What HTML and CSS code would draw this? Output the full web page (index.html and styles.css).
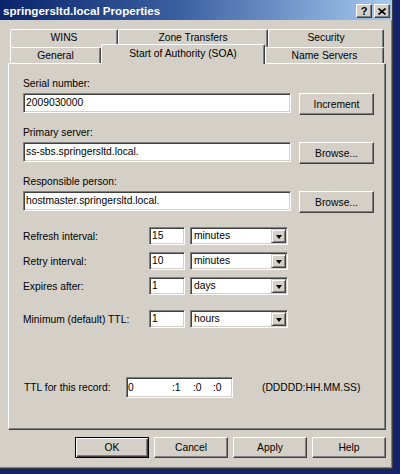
FILE: index.html
```html
<!DOCTYPE html>
<html>
<head>
<meta charset="utf-8">
<title>springersltd.local Properties</title>
<link rel="stylesheet" href="styles.css">
</head>
<body>
<div class="window">
  <div class="titlebar">
    <span class="title">springersltd.local Properties</span>
    <div class="tb-buttons">
      <div class="tb-btn help">?</div>
      <div class="tb-btn close">
        <svg width="8" height="7" viewBox="0 0 8 7"><path d="M0.5 0.5 L7.5 6.5 M7.5 0.5 L0.5 6.5" stroke="#000" stroke-width="1.6" fill="none"/></svg>
      </div>
    </div>
  </div>
  <div class="client">
    <div class="tab-row back">
      <div class="tab t-wins">WINS</div>
      <div class="tab t-zone">Zone Transfers</div>
      <div class="tab t-sec">Security</div>
    </div>
    <div class="tab-row front">
      <div class="tab t-gen">General</div>
      <div class="tab selected t-soa">Start of Authority (SOA)</div>
      <div class="tab t-ns">Name Servers</div>
    </div>
    <div class="panel">
      <div class="field">
        <div class="label">Serial number:</div>
        <div class="field-row">
          <div class="textbox wide">2009030000</div>
          <div class="button side">Increment</div>
        </div>
      </div>
      <div class="field">
        <div class="label">Primary server:</div>
        <div class="field-row">
          <div class="textbox wide">ss-sbs.springersltd.local.</div>
          <div class="button side">Browse...</div>
        </div>
      </div>
      <div class="field">
        <div class="label">Responsible person:</div>
        <div class="field-row">
          <div class="textbox wide">hostmaster.springersltd.local.</div>
          <div class="button side">Browse...</div>
        </div>
      </div>
      <div class="intervals">
        <div class="irow">
          <span class="ilabel">Refresh interval:</span>
          <div class="textbox num">15</div>
          <div class="combo"><span class="combo-text">minutes</span><span class="combo-btn"><span class="arrow"></span></span></div>
        </div>
        <div class="irow">
          <span class="ilabel">Retry interval:</span>
          <div class="textbox num">10</div>
          <div class="combo"><span class="combo-text">minutes</span><span class="combo-btn"><span class="arrow"></span></span></div>
        </div>
        <div class="irow">
          <span class="ilabel">Expires after:</span>
          <div class="textbox num">1</div>
          <div class="combo"><span class="combo-text">days</span><span class="combo-btn"><span class="arrow"></span></span></div>
        </div>
        <div class="irow gap-lg">
          <span class="ilabel">Minimum (default) TTL:</span>
          <div class="textbox num">1</div>
          <div class="combo"><span class="combo-text">hours</span><span class="combo-btn"><span class="arrow"></span></span></div>
        </div>
      </div>
      <div class="ttl-row">
        <span class="ttl-label">TTL for this record:</span>
        <div class="textbox ttl"><span class="seg d">0</span><span class="seg h">:1</span><span class="seg m">:0</span><span class="seg s">:0</span></div>
        <span class="fmt">(DDDDD:HH.MM.SS)</span>
      </div>
    </div>
    <div class="buttons">
      <div class="button dlg default">OK</div>
      <div class="button dlg">Cancel</div>
      <div class="button dlg">Apply</div>
      <div class="button dlg">Help</div>
    </div>
  </div>
</div>
</body>
</html>
```

FILE: styles.css
```css
* { box-sizing: border-box; }
html, body { margin: 0; padding: 0; }
body {
  width: 400px;
  height: 474px;
  overflow: hidden;
  background: #15246a;
  font-family: "Liberation Sans", Arial, sans-serif;
  font-size: 10.3px;
  color: #000;
}
.window {
  width: 393px;
  height: 469px;
  background: #d4d0c8;
  border-right: 1px solid #404040;
  border-bottom: 1px solid #404040;
  box-shadow: inset -1px -1px 0 #808080;
  display: flex;
  flex-direction: column;
}
.titlebar {
  height: 20px;
  flex: none;
  background: linear-gradient(to right, #0a246a 0%, #3a5fa0 45%, #a6caf0 100%);
  display: flex;
  align-items: center;
  justify-content: space-between;
  padding: 0 2px 0 3px;
}
.title {
  color: #fff;
  font-weight: bold;
  font-size: 11.6px;
  letter-spacing: 0;
}
.tb-buttons { display: flex; gap: 2px; margin-top: 2px; }
.tb-btn {
  width: 16px;
  height: 14px;
  background: #d4d0c8;
  border: 1px solid;
  border-color: #fff #404040 #404040 #fff;
  box-shadow: inset -1px -1px 0 #808080;
  display: flex;
  align-items: center;
  justify-content: center;
  font-weight: bold;
  font-size: 11px;
  line-height: 12px;
}
.client {
  padding: 9px 0 0 8px;
  display: flex;
  flex-direction: column;
}
.tab-row { display: flex; margin-left: 2px; }
.tab-row.back { height: 18px; }
.tab-row.front { height: 20px; margin-top: -3px; align-items: flex-start; }
.tab {
  background: #d4d0c8;
  border-top: 1px solid #fff;
  border-left: 1px solid #fff;
  border-right: 1px solid #404040;
  box-shadow: inset -1px 0 0 #808080;
  border-radius: 2px 2px 0 0;
  text-align: center;
  white-space: nowrap;
}
.back .tab { height: 18px; line-height: 16px; }
.front .tab { height: 16px; line-height: 15px; margin-top: 3px; }
.front .tab.selected {
  height: 20px;
  margin-top: 0;
  padding-top: 1px;
  line-height: 16px;
  position: relative;
  z-index: 1;
}
.t-wins { width: 108px; }
.t-zone { width: 150px; }
.t-sec { width: 116px; }
.t-gen { width: 91px; }
.t-soa { width: 164px; }
.t-ns { width: 119px; }

.panel {
  width: 378px;
  height: 367px;
  margin-top: -1px;
  border: 1px solid;
  border-color: #fff #404040 #404040 #fff;
  box-shadow: inset -1px -1px 0 #808080;
  padding: 14px 0 0 14px;
}
.field + .field { margin-top: 12px; }
.label { height: 12px; line-height: 12px; margin-bottom: 3px; }
.field-row { display: flex; align-items: flex-start; gap: 8px; }
.textbox {
  background: #fff;
  border: 1px solid;
  border-color: #808080 #fff #fff #808080;
  box-shadow: inset 1px 1px 0 #404040, inset -1px -1px 0 #d4d0c8;
  white-space: nowrap;
  overflow: hidden;
}
.textbox.wide { width: 268px; height: 20px; line-height: 18px; padding-left: 2px; }
.button {
  background: #d4d0c8;
  border: 1px solid;
  border-color: #fff #404040 #404040 #fff;
  box-shadow: inset -1px -1px 0 #808080;
  display: flex;
  align-items: center;
  justify-content: center;
  white-space: nowrap;
}
.button.side { width: 75px; height: 22px; }
.intervals { margin-top: 14px; }
.irow { display: flex; align-items: center; height: 18px; }
.irow + .irow { margin-top: 7px; }
.irow.gap-lg { margin-top: 15px; }
.ilabel { width: 126px; }
.textbox.num { width: 36px; height: 18px; line-height: 16px; padding-left: 2px; }
.combo {
  width: 98px;
  height: 18px;
  margin-left: 5px;
  background: #fff;
  border: 1px solid;
  border-color: #808080 #fff #fff #808080;
  box-shadow: inset 1px 1px 0 #404040, inset -1px -1px 0 #d4d0c8;
  padding: 1px;
  display: flex;
  align-items: stretch;
}
.combo-text { flex: 1; padding-left: 2px; line-height: 14px; }
.combo-btn {
  width: 15px;
  background: #d4d0c8;
  border: 1px solid;
  border-color: #d4d0c8 #404040 #404040 #d4d0c8;
  box-shadow: inset 1px 1px 0 #fff, inset -1px -1px 0 #808080;
  display: flex;
  align-items: center;
  justify-content: center;
}
.arrow {
  width: 0;
  height: 0;
  border-left: 3.5px solid transparent;
  border-right: 3.5px solid transparent;
  border-top: 4px solid #000;
  margin-top: 1px;
}
.ttl-row { display: flex; align-items: center; margin-top: 49px; height: 21px; }
.ttl-label { width: 103px; padding-left: 1px; }
.textbox.ttl { width: 107px; height: 21px; line-height: 19px; padding-left: 1px; display: flex; }
.seg { display: inline-block; }
.seg.d { width: 44px; }
.seg.h { width: 21px; }
.seg.m { width: 20px; }
.fmt { margin-left: 29px; }

.buttons {
  width: 378px;
  margin-top: 7px;
  display: flex;
  justify-content: flex-end;
  gap: 5px;
}
.button.dlg { width: 74px; height: 21px; }
.button.default {
  border-color: #000;
  box-shadow: inset 1px 1px 0 #fff, inset -1px -1px 0 #404040, inset -2px -2px 0 #808080;
}
```
